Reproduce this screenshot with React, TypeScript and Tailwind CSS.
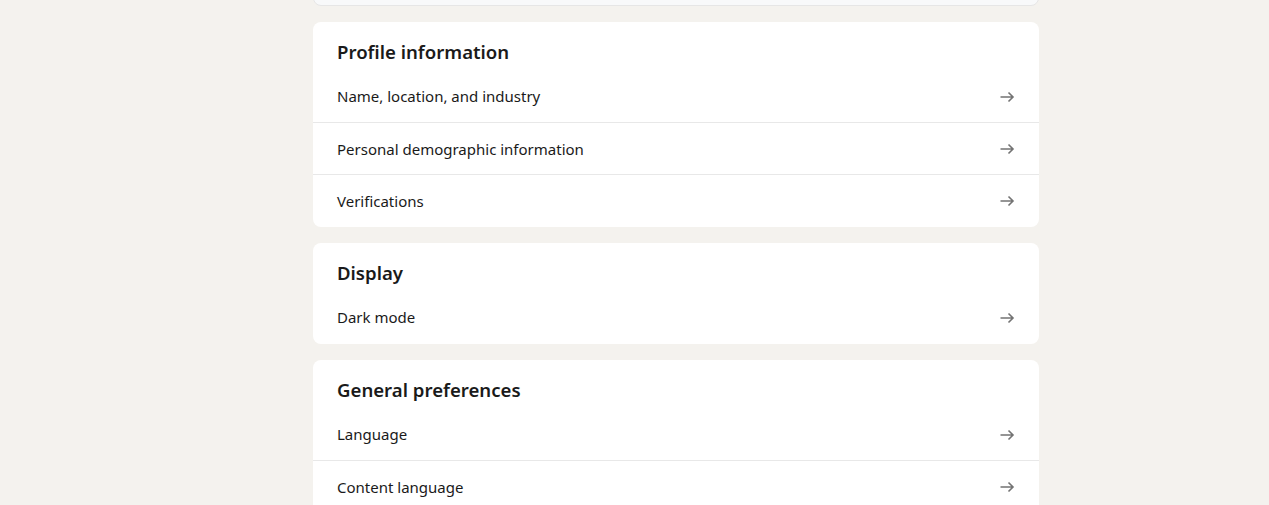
import React from "react";

const Arrow = () => (
  <svg width="16" height="16" viewBox="0 0 16 16" fill="none" className="shrink-0">
    <path d="M1.5 8h13M9.5 3.5 14 8 9.5 12.5" stroke="#737373" strokeWidth="1.6" />
  </svg>
);

type Section = { title: string; items: string[] };

const sections: Section[] = [
  { title: "Profile information", items: ["Name, location, and industry", "Personal demographic information", "Verifications"] },
  { title: "Display", items: ["Dark mode"] },
  { title: "General preferences", items: ["Language", "Content language"] },
];

export default function App() {
  return (
    <div
      className="w-full h-[505px] overflow-hidden bg-[#f4f2ee] flex"
      style={{ fontFamily: '"Noto Sans", "Open Sans", sans-serif' }}
    >
      <div className="w-[726px] ml-[313px] -mt-[99px] flex flex-col gap-4">
        <div className="h-[105px] shrink-0 bg-[#f8f9fa] rounded-lg border border-[#e6e6e6]" />
        {sections.map((s) => (
          <div key={s.title} className="bg-white rounded-lg shrink-0">
            <div className="px-6 pt-4 pb-1">
              <h2 className="text-[18.6px] leading-7 font-semibold text-[#1a1a1a]">{s.title}</h2>
            </div>
            <ul className="pb-[1px]">
              {s.items.map((it, i) => (
                <li
                  key={it}
                  className={`h-[52px] px-6 flex items-center justify-between ${i > 0 ? "border-t border-[#e8e8e8] pt-[1px]" : "pt-[1px]"}`}
                >
                  <span className="text-[15px] text-[#1a1a1a]">{it}</span>
                  <Arrow />
                </li>
              ))}
            </ul>
          </div>
        ))}
      </div>
    </div>
  );
}
